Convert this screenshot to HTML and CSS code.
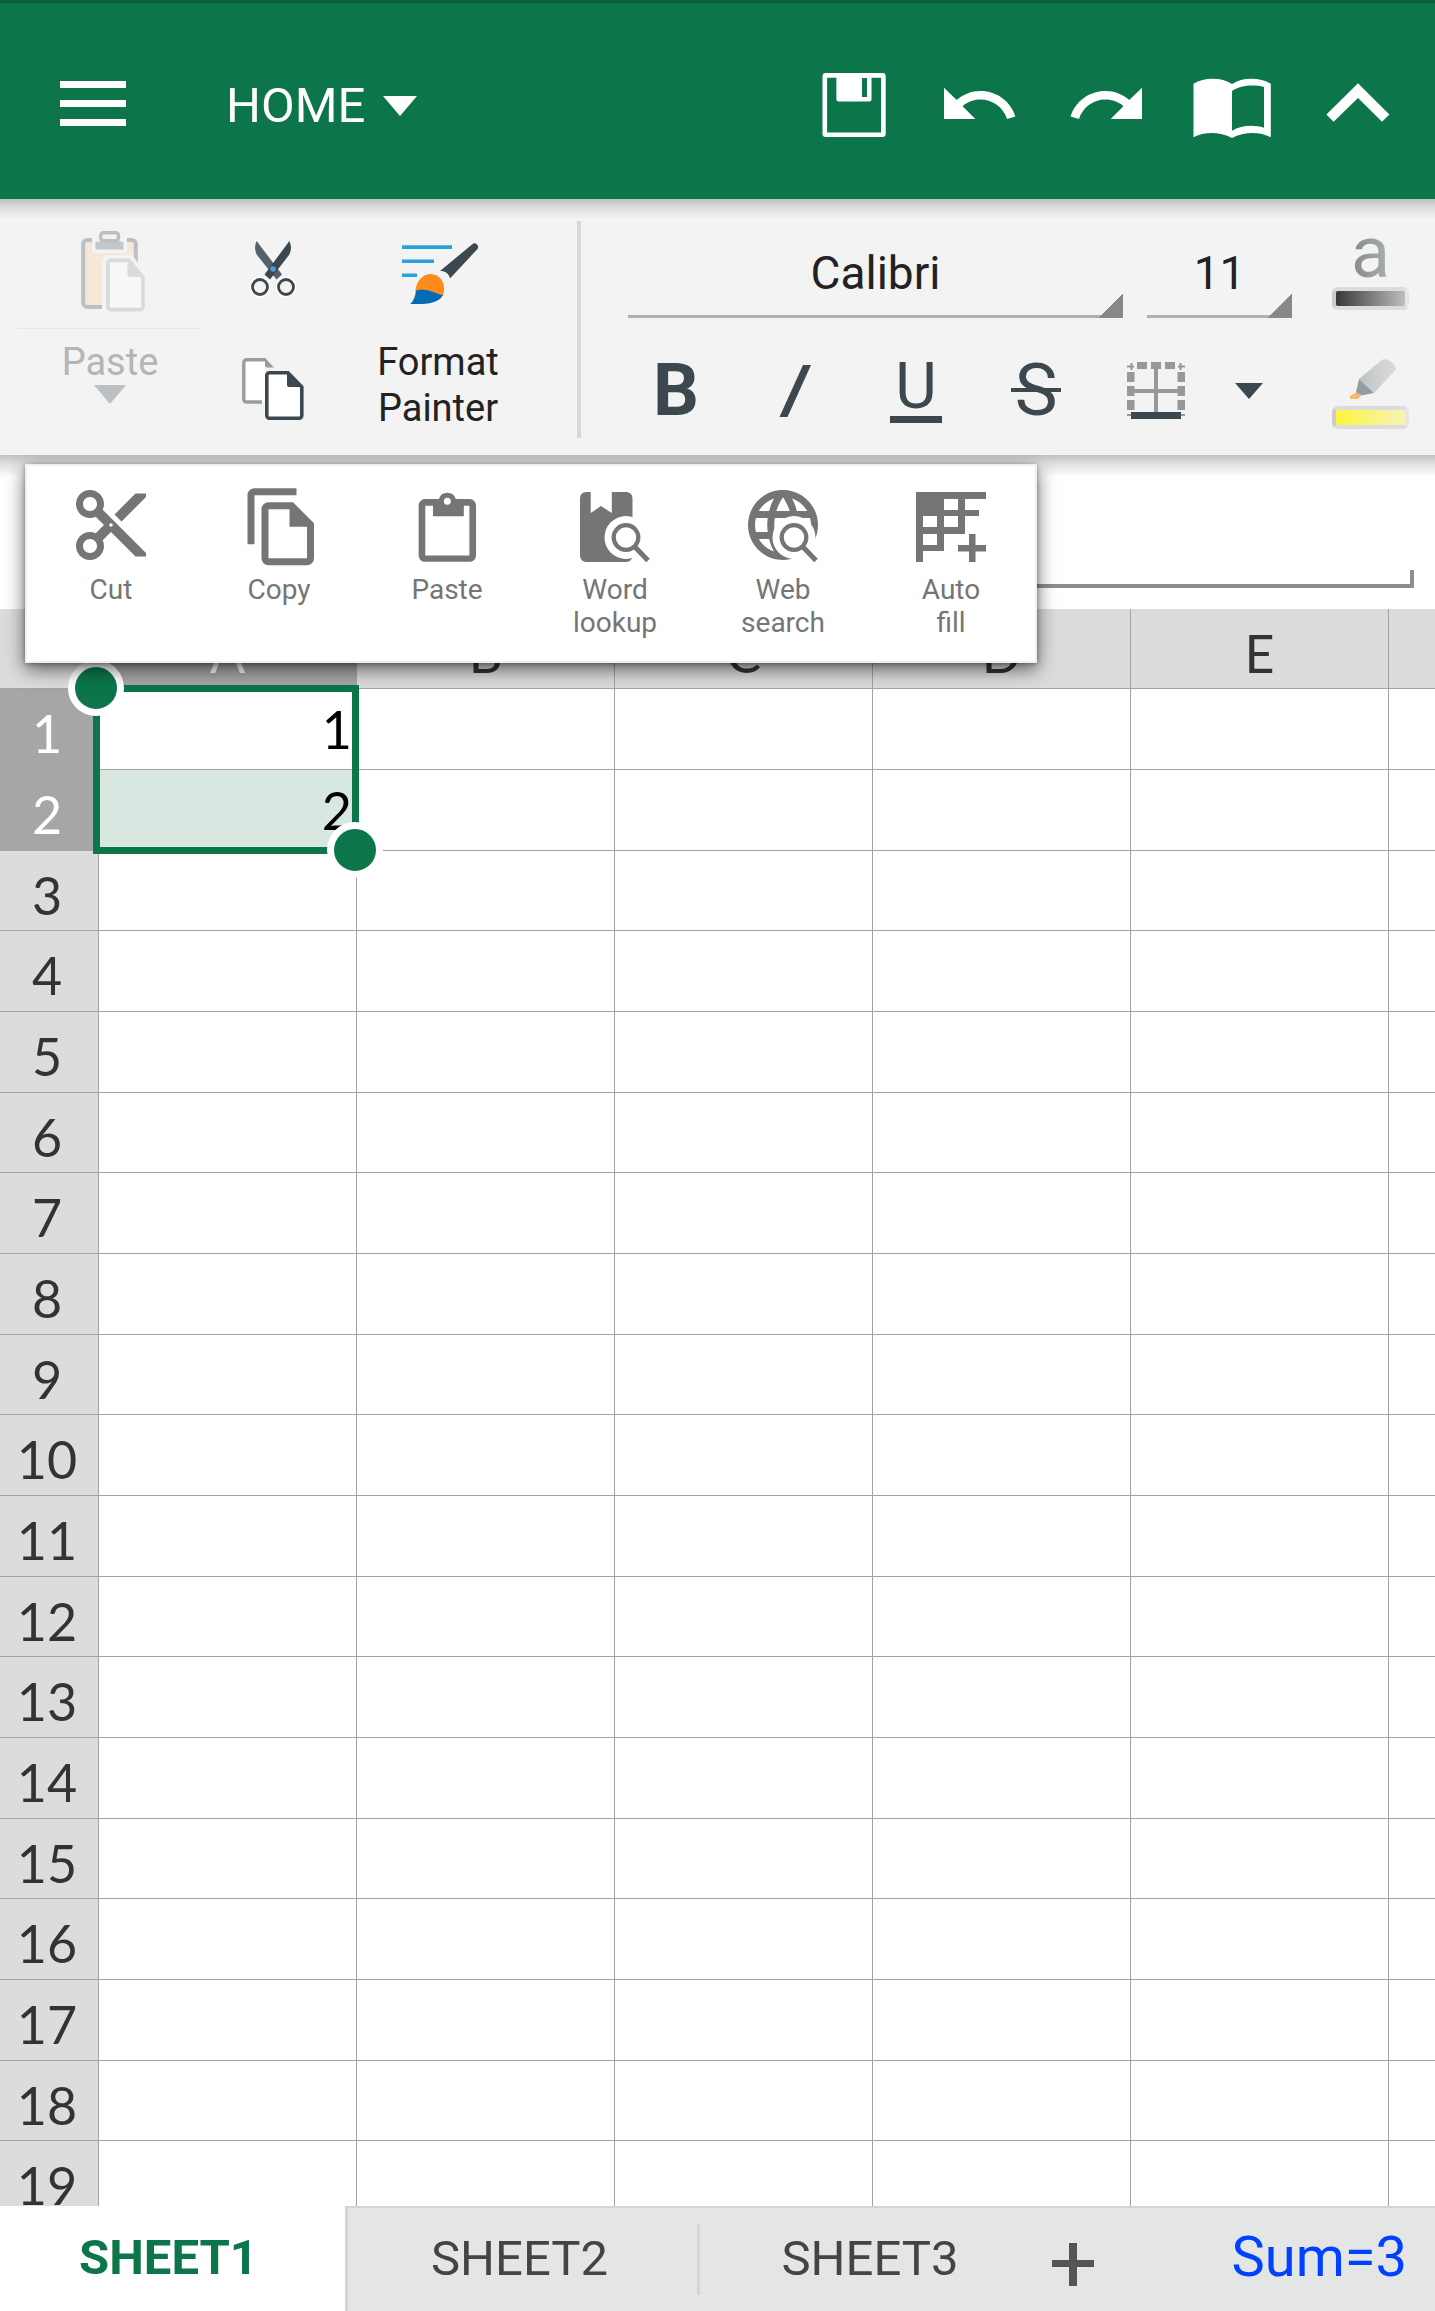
FILE: index.html
```html
<!DOCTYPE html>
<html lang="en">
<head>
  <meta charset="UTF-8">
  <meta name="viewport" content="width=device-width, initial-scale=1.0">
  <title>Spreadsheet</title>
  <link rel="stylesheet" href="styles.css">
</head>
<body>
<header class="app-bar">
  <button class="menu-btn" aria-label="Menu">
    <svg width="66" height="48" viewBox="0 0 66 48" fill="#fff"><path d="M0 0h66v7H0zM0 19h66v7H0zM0 38h66v7H0z"/></svg>
  </button>
  <button class="home-btn">HOME
    <svg width="34" height="20" viewBox="0 0 34 20" fill="#fff"><path d="M0 0h34L17 20z"/></svg>
  </button>
  <nav class="app-actions">
    <button aria-label="Save">
      <svg width="72" height="72" viewBox="0 0 72 72" fill="#fff">
        <rect x="6.8" y="6.4" width="58.6" height="59.4" rx="1" fill="none" stroke="#fff" stroke-width="4.6"/>
        <path fill-rule="evenodd" d="M18.4 8h35.1v22.5a2 2 0 0 1-2 2H20.4a2 2 0 0 1-2-2zM44 8.7V28h5V8.7z"/>
      </svg>
    </button>
    <button aria-label="Undo">
      <svg width="72" height="72" viewBox="0 0 72 72" fill="#fff">
        <path d="M0 18.7V50h31.3L18.6 37.2C23.5 33 29.5 30.6 36.5 30.6 49 30.6 59.5 38.8 63 50l8.4-2.5C66.8 32.5 53 22 36.5 22 27.4 22 19 25.4 12.7 31z"/>
      </svg>
    </button>
    <button aria-label="Redo">
      <svg width="72" height="72" viewBox="0 0 72 72" fill="#fff">
        <path transform="translate(72) scale(-1 1)" d="M0 18.7V50h31.3L18.6 37.2C23.5 33 29.5 30.6 36.5 30.6 49 30.6 59.5 38.8 63 50l8.4-2.5C66.8 32.5 53 22 36.5 22 27.4 22 19 25.4 12.7 31z"/>
      </svg>
    </button>
    <button aria-label="Reading view">
      <svg width="72" height="72" viewBox="0 0 72 72" fill="#fff">
        <path fill-rule="evenodd" d="M-2.5 14.7C8 8 26 8 36 15 46 8 64 8 74.8 14.7V68.3C64 62.5 48 62.5 36 69 24 62.5 8 62.5-2.5 68.3zM36 22V61.7C45 56 58 55.5 68 58.7V18C58 15.5 45 16 36 22z"/>
      </svg>
    </button>
    <button aria-label="Collapse ribbon">
      <svg width="72" height="72" viewBox="0 0 72 72" fill="#fff"><path d="M36 14.3 67.4 45.5 60 52.7 36 29 11.6 52.7 4.4 45.5z"/></svg>
    </button>
  </nav>
</header>

<section class="ribbon">
  <div class="paste-group">
    <button class="tool paste-icon" aria-label="Paste" disabled>
      <svg width="64" height="82" viewBox="0 0 64 82">
        <rect x="2.2" y="9" width="52.6" height="67" rx="4" fill="#f5e8d8" stroke="#bcc0c3" stroke-width="4"/>
        <path d="M11 4h35v15a3 3 0 0 1-3 3H14a3 3 0 0 1-3-3z" fill="#f3f3f3"/>
        <rect x="14.5" y="10.5" width="28" height="8" rx="1" fill="#c3c7c9"/>
        <rect x="19.8" y="1.8" width="17.6" height="8" rx="2.5" fill="#f3f3f3" stroke="#bcc0c3" stroke-width="3.5"/>
        <path d="M21 82V30a6 6 0 0 1 6-6h24l13 17v41z" fill="#f3f3f3"/>
        <path d="M27 32a2.6 2.6 0 0 1 2.6-2.6H48L62 47v29a2.6 2.6 0 0 1-2.6 2.6H29.6A2.6 2.6 0 0 1 27 76z" fill="#f7f7f7" stroke="#d8dadb" stroke-width="3.6"/>
        <path d="M46.5 28.5V44a2 2 0 0 0 2 2H62z" fill="#d8dadb"/>
      </svg>
    </button>
    <button class="tool paste-label" disabled>Paste
      <svg width="32" height="19" viewBox="0 0 32 19" fill="#bcc0c3"><path d="M0 0h32L16 19z"/></svg>
    </button>
  </div>
  <div class="clip-group">
    <button class="tool" aria-label="Cut">
      <svg width="46" height="56" viewBox="0 0 46 56">
        <path d="M6.6 0C4.5 5 4.5 9 7 14L26.5 38.5 32 33.5z" fill="#56616d"/>
        <path d="M39.4 0C41.5 5 41.5 9 39 14L20 38.5 14.5 33.5z" fill="#3d484e"/>
        <circle cx="23" cy="28" r="2.8" fill="#4a9fd8"/>
        <circle cx="10" cy="46" r="10.5" fill="#fff"/><circle cx="36" cy="46" r="10.5" fill="#fff"/>
        <g fill="#f3f3f3" stroke="#3d484e" stroke-width="2.8"><circle cx="10" cy="46" r="7.5"/><circle cx="36" cy="46" r="7.5"/></g>
      </svg>
    </button>
    <button class="tool" aria-label="Copy">
      <svg width="62" height="62" viewBox="0 0 62 62">
        <path d="M20 44H4.500A2.700 2.700 0 0 1 1.800 41.300V4.500A2.700 2.700 0 0 1 4.500 1.800H23V44z" fill="#fff"/>
        <path d="M20 44H4.500A2.700 2.700 0 0 1 1.800 41.300V4.500A2.700 2.700 0 0 1 4.500 1.800H24" fill="none" stroke="#999e9d" stroke-width="3.4"/>
        <path d="M23 0 32 9.5H25a2 2 0 0 1-2-2z" fill="#999e9d"/>
        <path d="M24.800 17.500A2.700 2.700 0 0 1 27.500 14.800H46L59.800 29V57.500A2.700 2.700 0 0 1 57.100 60.200H27.500A2.700 2.700 0 0 1 24.800 57.500z" fill="#fff" stroke="#3d484e" stroke-width="3.6"/>
        <path d="M45 14V27a2 2 0 0 0 2 2H60.5z" fill="#3d484e"/>
      </svg>
    </button>
  </div>
  <button class="tool painter">
    <span class="painter-icon">
      <svg width="76" height="62" viewBox="0 0 76 62">
        <path d="M0 2.3h50V6H0zM0 16.5h32V20H0zM0 30.5h15V34H0z" fill="#2aa1d8"/>
        <path d="M70 1.5a3.5 3.5 0 0 1 5 5L48 35.5C47 30.5 43.5 28 38 28z" fill="#3d484e"/>
        <path d="M13.5 50C13 40 20 31 28 31 38 31 45 40 41 53 30 52 26 45 13.5 50z" fill="#ff8c1a"/>
        <path d="M14 47.5C24 44 31 50 41 52 37 60.5 24 61.5 8.3 61 11.5 58 13.5 53 14 47.5z" fill="#006cb5"/>
      </svg>
    </span>
    Format<br>Painter
  </button>
  <div class="divider"></div>
  <div class="font-group">
    <div class="font-row">
      <select class="font-name" aria-label="Font"><option>Calibri</option></select>
      <select class="font-size" aria-label="Font size"><option>11</option></select>
    </div>
    <div class="style-row">
      <button class="tool style-btn bold">B</button>
      <button class="tool style-btn" aria-label="Italic">
        <svg width="34" height="52" viewBox="0 0 34 52"><path d="M24 0h8L8.500 52h-8z" fill="#3d484e"/></svg>
      </button>
      <button class="tool style-btn"><span class="underline">U</span></button>
      <button class="tool style-btn"><span class="strike">S</span></button>
      <button class="tool style-btn" aria-label="Borders">
        <svg width="58" height="58" viewBox="0 0 58 58">
          <path d="M10 0h10v7H10zM24 0h10v7H24zM38 0h10v7H38zM0 10h7.5v10H0zM0 24h7.5v10H0zM0 38h7.5v10H0zM50.5 10H58v10h-7.5zM50.5 24H58v10h-7.5zM50.5 38H58v10h-7.5zM27 7h4v43h-4zM7 27h44v4H7z" fill="#989898"/>
          <path d="M0 4.5h7M4.500 1v7M51 4.500h7M53.500 1v7M0 53h58" stroke="#989898" stroke-width="2"/>
          <path d="M4 50h50v7H4z" fill="#3d484e"/>
        </svg>
      </button>
      <button class="tool border-more" aria-label="More borders">
        <svg width="28" height="16" viewBox="0 0 28 16" fill="#3d484e"><path d="M0 0h28L14 16z"/></svg>
      </button>
    </div>
  </div>
  <div class="color-group">
    <button class="tool font-color"><span class="letter">a</span><span class="swatch black"></span></button>
    <button class="tool fill-color" aria-label="Fill color">
      <svg width="77" height="48" viewBox="0 0 77 48">
        <defs><linearGradient id="pen"><stop offset="0" stop-color="#c0c3c4"/><stop offset="1" stop-color="#dadcdc"/></linearGradient></defs>
        <path d="M27 21 50 1.800C55-1 64 6 64 11.500L42 35z" fill="url(#pen)"/>
        <path d="M27 21 42 35 29 37.500 24 34.500z" fill="#949ba1"/>
        <path d="M24 34.500 29.500 37 26 41H18V38z" fill="#ffb46b"/>
      </svg>
      <span class="swatch yellow"></span>
    </button>
  </div>
</section>

<main class="workspace">
  <div class="formula-bar">
    <input class="formula" type="text" aria-label="Formula">
  </div>

  <div class="sheet">
    <table>
      <colgroup><col class="col-num"><col class="col"><col class="col"><col class="col"><col class="col"><col class="col"><col></colgroup>
      <thead>
        <tr><th></th><th class="on">A</th><th>B</th><th>C</th><th>D</th><th>E</th><th></th></tr>
      </thead>
      <tbody>
        <tr><th class="on">1</th><td>1</td><td></td><td></td><td></td><td></td><td></td></tr>
        <tr><th class="on">2</th><td class="filled">2</td><td></td><td></td><td></td><td></td><td></td></tr>
        <tr><th>3</th><td></td><td></td><td></td><td></td><td></td><td></td></tr>
        <tr><th>4</th><td></td><td></td><td></td><td></td><td></td><td></td></tr>
        <tr><th>5</th><td></td><td></td><td></td><td></td><td></td><td></td></tr>
        <tr><th>6</th><td></td><td></td><td></td><td></td><td></td><td></td></tr>
        <tr><th>7</th><td></td><td></td><td></td><td></td><td></td><td></td></tr>
        <tr><th>8</th><td></td><td></td><td></td><td></td><td></td><td></td></tr>
        <tr><th>9</th><td></td><td></td><td></td><td></td><td></td><td></td></tr>
        <tr><th>10</th><td></td><td></td><td></td><td></td><td></td><td></td></tr>
        <tr><th>11</th><td></td><td></td><td></td><td></td><td></td><td></td></tr>
        <tr><th>12</th><td></td><td></td><td></td><td></td><td></td><td></td></tr>
        <tr><th>13</th><td></td><td></td><td></td><td></td><td></td><td></td></tr>
        <tr><th>14</th><td></td><td></td><td></td><td></td><td></td><td></td></tr>
        <tr><th>15</th><td></td><td></td><td></td><td></td><td></td><td></td></tr>
        <tr><th>16</th><td></td><td></td><td></td><td></td><td></td><td></td></tr>
        <tr><th>17</th><td></td><td></td><td></td><td></td><td></td><td></td></tr>
        <tr><th>18</th><td></td><td></td><td></td><td></td><td></td><td></td></tr>
        <tr><th>19</th><td></td><td></td><td></td><td></td><td></td><td></td></tr>
      </tbody>
    </table>
    <div class="selection">
      <span class="handle start"></span>
      <span class="handle end"></span>
    </div>
  </div>

  <div class="popup">
    <button>
      <svg width="84" height="84" viewBox="0 0 24 24"><path d="M9.640 7.640c.23-.5.36-1.050.36-1.640 0-2.210-1.790-4-4-4S2 3.790 2 6s1.790 4 4 4c.59 0 1.140-.13 1.640-.36L10 12l-2.360 2.360C7.140 14.130 6.590 14 6 14c-2.210 0-4 1.790-4 4s1.790 4 4 4 4-1.790 4-4c0-.59-.13-1.140-.36-1.640L12 14l7 7h3v-1L9.640 7.640zM6 8c-1.100 0-2-.89-2-2s.9-2 2-2 2 .89 2 2-.9 2-2 2zm0 12c-1.100 0-2-.89-2-2s.9-2 2-2 2 .89 2 2-.9 2-2 2zm6-7.500c-.28 0-.5-.22-.5-.5s.22-.5.5-.5.5.22.5.5-.22.5-.5.5zM19 3l-6 6 2 2 7-7V3z"/></svg>
      Cut
    </button>
    <button>
      <svg width="84" height="84" viewBox="-1 -0.500 24 24"><path fill-rule="evenodd" d="M16 1H4a2 2 0 0 0-2 2v14h2V3h12zM15 5l6 6v10a2 2 0 0 1-2 2H8a2 2 0 0 1-2-2V7a2 2 0 0 1 2-2zM8 7v14h11v-9h-5V7z"/></svg>
      Copy
    </button>
    <button>
      <svg width="84" height="84" viewBox="0 0 24 24"><path fill-rule="evenodd" d="M5.700 4.600H9.700a2.500 2.500 0 0 1 4.800 0h4a1.800 1.800 0 0 1 1.800 1.800v14.300a1.800 1.800 0 0 1-1.800 1.800H5.700a1.800 1.800 0 0 1-1.800-1.800V6.400a1.800 1.800 0 0 1 1.800-1.800zM5.800 6.500v14.200h12.600V6.500H16.800v3H8v-3zM12.100 4.200a1 1 0 1 0 0 2 1 1 0 0 0 0-2z"/></svg>
      Paste
    </button>
    <button>
      <svg width="84" height="84" viewBox="0 0 84 84">
        <path d="M13 9h4.700v21L28 23l10.800 7V9H53.500a6 6 0 0 1 6 6v58a6 6 0 0 1-6 6H13a6 6 0 0 1-6-6V15a6 6 0 0 1 6-6z"/>
        <circle cx="53" cy="54.500" r="21.500" fill="#fff"/>
        <g fill="none" stroke="#757575"><circle cx="53" cy="54.500" r="12.300" stroke-width="4.200"/><path d="M62 64 75 77.500" stroke-width="5"/></g>
      </svg>
      Word<br>lookup
    </button>
    <button>
      <svg width="84" height="84" viewBox="0 0 84 84">
        <path transform="scale(3.500)" d="M11.990 2C6.470 2 2 6.480 2 12s4.470 10 9.990 10C17.520 22 22 17.520 22 12S17.520 2 11.990 2zm6.930 6h-2.950c-.32-1.250-.78-2.450-1.380-3.560 1.840.63 3.370 1.910 4.330 3.560zM12 4.040c.83 1.200 1.480 2.530 1.910 3.960h-3.820c.43-1.430 1.080-2.760 1.910-3.960zM4.260 14C4.100 13.360 4 12.690 4 12s.1-1.360.26-2h3.380c-.08.66-.14 1.320-.14 2 0 .68.06 1.340.14 2H4.260zm.82 2h2.950c.32 1.250.78 2.450 1.380 3.560-1.840-.63-3.370-1.900-4.330-3.560zm2.950-8H5.080c.96-1.660 2.490-2.930 4.330-3.560C8.810 5.550 8.350 6.750 8.030 8zM12 19.960c-.83-1.200-1.480-2.530-1.910-3.960h3.820c-.43 1.430-1.080 2.760-1.910 3.960zM14.340 14H9.660c-.09-.66-.16-1.320-.16-2 0-.68.07-1.350.16-2h4.680c.09.65.16 1.320.16 2 0 .68-.07 1.340-.16 2zm.25 5.560c.6-1.110 1.060-2.310 1.380-3.560h2.950c-.96 1.650-2.490 2.930-4.330 3.560zM16.360 14c.08-.66.14-1.320.14-2 0-.68-.06-1.340-.14-2h3.380c.16.64.26 1.310.26 2s-.1 1.360-.26 2h-3.380z"/>
        <circle cx="53" cy="54.500" r="21.500" fill="#fff"/>
        <g fill="none" stroke="#757575"><circle cx="53" cy="54.500" r="12.300" stroke-width="4.200"/><path d="M62 64 75 77.500" stroke-width="5"/></g>
      </svg>
      Web<br>search
    </button>
    <button>
      <svg width="84" height="84" viewBox="0 0 84 84">
        <path d="M7 9h70v7H56v11h14v6H56v18H35v17H14v11H7z"/>
        <path d="M35 16h14v11H35zM14 33h14v11H14zM35 33h14v11H35zM14 51h14v11H14z" fill="#fff"/>
        <path d="M60 51h6.500v11H77v6.500H66.500V79H60V68.500H49V62h11z"/>
      </svg>
      Auto<br>fill
    </button>
  </div>
</main>

<footer class="tabs">
  <button class="tab active">SHEET1</button>
  <div class="tab-rest">
    <button class="tab">SHEET2</button>
    <button class="tab separated">SHEET3</button>
    <button class="add-tab" aria-label="Add sheet">
      <svg width="42" height="54" viewBox="0 0 42 54" fill="#555"><path d="M17 10h8v17h17v7H25v19h-8V34H0v-7h17z"/></svg>
    </button>
    <span class="sum">Sum=3</span>
  </div>
</footer>
</body>
</html>
```

FILE: styles.css
```css
* {
  box-sizing: border-box;
}

body {
  margin: 0;
  height: 100vh;
  display: flex;
  flex-direction: column;
  overflow: hidden;
  background: #fff;
  font-family: Roboto, "Liberation Sans", sans-serif;
}

button {
  margin: 0;
  padding: 0;
  border: 0;
  background: none;
  color: inherit;
  font: inherit;
}

svg {
  display: block;
  overflow: visible;
}

/* top bar */
.app-bar {
  display: flex;
  flex: none;
  align-items: center;
  height: 199px;
  padding: 8px 14px 0 60px;
  border-top: 3px solid #0b5c3a;
  background: #0c764a;
  color: #fff;
}

.home-btn {
  display: flex;
  align-items: center;
  gap: 18px;
  margin-left: 100px;
  padding-top: 2px;
  font-size: 49px;
  line-height: 56px;
}

.app-actions {
  display: flex;
  margin-left: auto;
}

.app-actions button {
  display: flex;
  justify-content: center;
  width: 126px;
}

/* ribbon */
.ribbon {
  display: flex;
  flex: none;
  height: 256px;
  padding: 10px 26px 0 17px;
  background: #f3f3f3 linear-gradient(#c1c1c1, #dcdcdc 40%, #f3f3f3) 0 0 / 100% 20px no-repeat;
  color: #222;
  font-size: 38px;
  line-height: 46px;
}

.tool {
  display: flex;
  flex-direction: column;
  align-items: center;
}

.paste-group {
  width: 186px;
}

.paste-icon {
  width: 100%;
  height: 120px;
  padding: 6px 0 0 6px;
  justify-content: center;
  border-bottom: 1px solid #e8e8e8;
}

.paste-label {
  width: 100%;
  padding-top: 10px;
  color: #b5b5b5;
}

.clip-group {
  width: 140px;
}

.clip-group .tool {
  width: 100%;
  height: 120px;
  justify-content: center;
}

.painter {
  display: block;
  width: 190px;
  height: 222px;
}

.painter-icon {
  display: flex;
  align-items: center;
  justify-content: center;
  height: 130px;
  padding-left: 4px;
}

.divider {
  width: 4px;
  height: 217px;
  margin: 12px 47px 0 44px;
  background: #d8d8d8;
}

.font-group {
  flex: 1;
  padding-top: 18px;
}

.font-row {
  display: flex;
  gap: 24px;
}

/* underline and corner triangle */
.font-row select {
  height: 91px;
  padding: 0;
  border: 0;
  border-radius: 0;
  appearance: none;
  background:
    linear-gradient(135deg, transparent 50%, #888 50%) right bottom / 24px 24px no-repeat,
    linear-gradient(#b0b0b0, #b0b0b0) left bottom / 100% 3px no-repeat;
  color: #222;
  font: 46px Roboto, "Liberation Sans", sans-serif;
  text-align: center;
  text-align-last: center;
}

.font-name {
  flex: 1;
}

.font-size {
  width: 145px;
}

.style-row {
  display: flex;
  margin: 35px 0 0 -12px;
  color: #3d484e;
}

.style-btn {
  width: 120px;
  height: 76px;
  justify-content: center;
  font-size: 72px;
}

.bold {
  font-weight: 700;
}

.underline {
  width: 52px;
  height: 70px;
  margin-bottom: 6px;
  border-bottom: 7px solid #3d484e;
  font-size: 64px;
  line-height: 68px;
}

.strike {
  position: relative;
}

.strike::after {
  content: "";
  position: absolute;
  left: -4px;
  right: -4px;
  top: 20px;
  height: 4px;
  background: #3d484e;
}

.border-more {
  width: 66px;
  justify-content: center;
}

.color-group {
  display: flex;
  flex-direction: column;
  gap: 48px;
  width: 77px;
  margin-left: 40px;
  padding-top: 9px;
}

.letter {
  background: linear-gradient(90deg, #848b8d, #abafb1);
  background-clip: text;
  color: transparent;
  font-size: 72px;
  line-height: 69px;
}

.swatch {
  width: 77px;
  height: 23px;
  border: 4px solid #dcdcdc;
  border-color: #dcdcdc #e6e6e6 #dcdcdc #ccc;
  border-radius: 6px;
}

.black {
  background: linear-gradient(90deg, #383838, #bdbdbd);
}

.yellow {
  background: linear-gradient(90deg, #fdf53a, #f6f3b8);
}

/* formula bar and grid */
.workspace {
  position: relative;
  flex: 1;
  min-height: 0;
  overflow: hidden;
}

.formula-bar {
  height: 154px;
  padding: 29px 21px 21px 25px;
  background: linear-gradient(#c1c1c1, #e0e0e0 40%, #fff) 0 0 / 100% 22px no-repeat;
}

/* only the corner of the underline turns upwards */
.formula {
  display: block;
  width: 100%;
  height: 104px;
  border: 0;
  border-bottom: 4px solid #8e8e8e;
  background: linear-gradient(#8e8e8e, #8e8e8e) right bottom / 4px 14px no-repeat;
}

.sheet {
  position: relative;
  font-family: Lato, Carlito, sans-serif;
  font-size: 52px;
  line-height: 60px;
}

table {
  width: 100%;
  table-layout: fixed;
  border-collapse: separate;
  border-spacing: 0;
}

.col-num {
  width: 99px;
}

.col {
  width: 258px;
}

th,
td {
  height: 81px;
  padding: 0;
  border-right: 1px solid #a3a3a3;
  border-bottom: 1px solid #a3a3a3;
}

tbody tr:nth-child(3n) > * {
  height: 80px;
}

thead th {
  height: 80px;
}

th {
  padding-top: 8px;
  background: #dcdcdc;
  color: #333;
  font-weight: 400;
}

tbody th {
  padding-right: 4px;
}

tr > :last-child {
  border-right: 0;
}

th.on {
  border-color: #a6a6a6;
  background: #a6a6a6;
  color: #fff;
}

td {
  padding-right: 4px;
  color: #000;
  text-align: right;
}

.filled {
  background: #d8e8e0;
}

.selection {
  position: absolute;
  top: 76px;
  left: 93px;
  width: 266px;
  height: 169px;
  border: 7px solid #0c764a;
}

.handle {
  position: absolute;
  width: 56px;
  height: 56px;
  border: 7px solid #fff;
  border-radius: 50%;
  background: #0c764a;
}

.start {
  top: -32px;
  left: -32px;
}

.end {
  right: -31px;
  bottom: -31px;
}

/* context popup */
.popup {
  position: absolute;
  top: 9px;
  left: 25px;
  display: flex;
  padding: 17px 0 22px;
  border: 2px solid #f0f0f0;
  background: #fff;
  box-shadow: 0 6px 18px rgba(0, 0, 0, 0.6), 0 1px 4px rgba(0, 0, 0, 0.3);
  color: #757575;
  font-size: 28px;
  line-height: 33px;
}

.popup button {
  display: block;
  width: 168px;
  align-self: flex-start;
}

.popup svg {
  margin: 0 auto 6px;
  fill: #757575;
}

/* sheet tabs */
.tabs {
  display: flex;
  flex: none;
  height: 105px;
  color: #444;
  font-size: 49px;
}

.tab {
  width: 349px;
  padding: 0 6px 2px 0;
}

.active {
  width: 345px;
  padding-right: 8px;
  color: #0c764a;
  font-weight: 700;
}

.tab-rest {
  display: flex;
  flex: 1;
  align-items: center;
  padding-right: 28px;
  border-top: 2px solid #d3d5d4;
  border-left: 3px solid #d3d5d4;
  background: #e4e6e5;
}

.separated {
  height: 71px;
  border-left: 3px solid #d3d5d4;
}

.add-tab {
  margin-left: 6px;
}

.sum {
  margin-left: auto;
  padding-bottom: 6px;
  color: #0040ff;
  font-size: 56px;
}
```
